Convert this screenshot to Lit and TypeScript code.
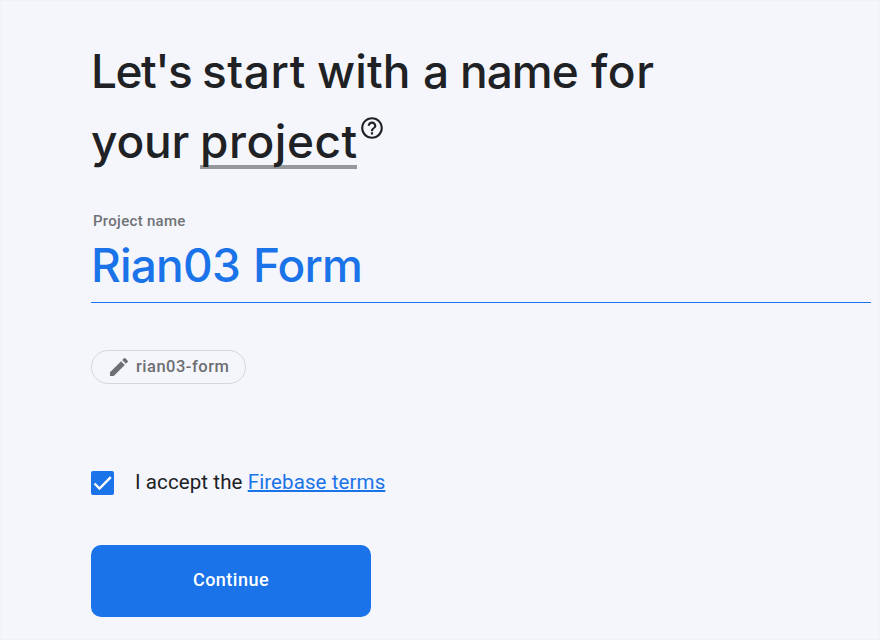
import { LitElement, html, css } from "lit";
import { customElement } from "lit/decorators.js";

@customElement("app-root")
class AppRoot extends LitElement {
  static styles = css`
    :host { display: block; height: 640px; box-sizing: border-box; background: #f4f6fb; border: 1px solid #f0f2f6; overflow: hidden; font-family: Roboto, "Liberation Sans", sans-serif; color: #202124; }
    main { padding: 35px 8px 0 90px; }
    h1 { margin: 0; font: 500 46px/70px Inter, sans-serif; height: 140px; white-space: nowrap; }
    .title { display: grid; grid-template-columns: 111px 115px 106px 37px 131px 80px; letter-spacing: -1px; }
    .title .tight { letter-spacing: -1.5px; }
    .title .wide { letter-spacing: .6px; }
    .title .mid { letter-spacing: .1px; }
    .row { display: flex; align-items: flex-start; }
    .your { width: 109px; letter-spacing: -.2px; }
    .word { width: 157px; height: 63px; letter-spacing: .55px; border-bottom: 4px solid #97989b; box-sizing: border-box; }
    .help { width: 26px; height: 26px; margin: 9px 0 0 2px; fill: #202124; }
    label { display: block; margin: 35px 0 0 2px; font: 500 15px/20px Roboto, sans-serif; letter-spacing: .3px; color: #707276; }
    .field { height: 71px; border-bottom: 1px solid #1a73e8; font: 500 46px/69px Inter, sans-serif; letter-spacing: -.8px; word-spacing: 1.5px; color: #1a73e8; }
    .chip { display: flex; align-items: center; box-sizing: border-box; width: 155px; height: 34px; margin-top: 47px; padding-left: 15px; gap: 5px; border: 1px solid #d5d7db; border-radius: 17px; color: #6d6f73; font: 500 16.5px/32px Roboto, sans-serif; letter-spacing: .5px; }
    .chip span { height: 32px; }
    .pencil { width: 24px; height: 24px; fill: #6d6f73; }
    .terms { display: flex; align-items: center; gap: 21px; margin-top: 84px; height: 30px; font-size: 20.5px; letter-spacing: .1px; }
    .terms span { padding-bottom: 2px; }
    .box { width: 23px; height: 24px; background: #1a73e8; border-radius: 2px; fill: none; stroke: #fff; stroke-width: 2.4; }
    a { color: #1a73e8; text-decoration: underline; text-decoration-thickness: 2px; }
    button { display: block; width: 280px; height: 72px; margin-top: 47px; border: 0; border-radius: 10px; padding: 0 0 3px; background: #1a73e8; color: #fff; font: 500 18px Roboto, sans-serif; letter-spacing: .5px; }
  `;
  render() {
    return html`<main>
      <h1><span class="title"><span class="tight">Let's </span><span class="wide">start </span><span class="mid">with </span><span>a </span><span>name </span><span class="wide">for</span></span><span class="row"><span class="your">your </span><span class="word">project</span><svg class="help" viewBox="0 0 24 24"><path d="M11 18h2v-2h-2v2zm1-16C6.480 2 2 6.480 2 12s4.480 10 10 10 10-4.480 10-10S17.520 2 12 2zm0 18c-4.410 0-8-3.590-8-8s3.590-8 8-8 8 3.590 8 8-3.590 8-8 8zm0-14c-2.210 0-4 1.790-4 4h2c0-1.100.9-2 2-2s2 .9 2 2c0 2-3 1.750-3 5h2c0-2.250 3-2.500 3-5 0-2.210-1.790-4-4-4z"/></svg></span></h1>
      <label>Project name</label>
      <div class="field">Rian03 Form</div>
      <div class="chip"><svg class="pencil" viewBox="0 0 24 24"><path d="M3 17.250V21h3.750L17.810 9.940l-3.750-3.750L3 17.250zM20.710 7.040c.39-.39.39-1.020 0-1.410l-2.340-2.340a1 1 0 0 0-1.410 0l-1.830 1.830 3.750 3.750 1.830-1.830z"/></svg><span>rian03-form</span></div>
      <div class="terms"><svg class="box" viewBox="0 0 23 24"><path d="M3.500 12.500l5 5L19.800 6.200"/></svg><span>I accept the <a>Firebase terms</a></span></div>
      <button>Continue</button>
    </main>`;
  }
}
